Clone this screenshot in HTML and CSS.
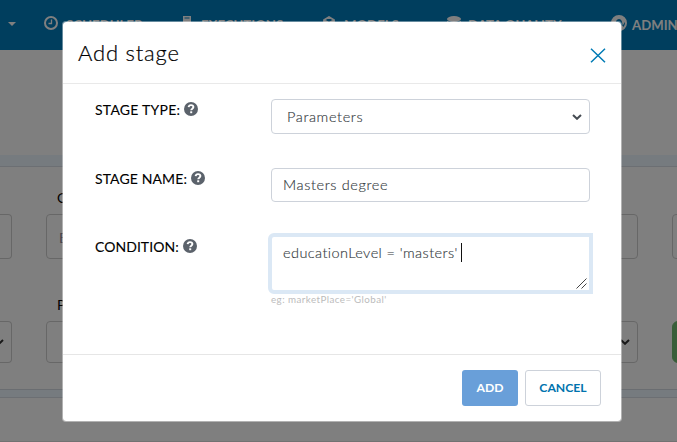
FILE: index.html
```
<!DOCTYPE html>
<html lang="en">
<head>
<meta charset="utf-8">
<title>Add stage</title>
<link rel="stylesheet" href="styles.css">
</head>
<body>
<svg width="0" height="0" class="defs">
  <symbol id="help" viewBox="0 0 14 14"><circle cx="7" cy="7" r="7" fill="#5b626b"/><path d="M4.600 5.200C4.800 3.700 5.800 3.100 7 3.100c1.400 0 2.400.8 2.400 2 0 1.600-2.200 1.600-2.200 3.200" fill="none" stroke="#fff" stroke-width="1.900"/><rect x="6.200" y="9.300" width="2" height="1.900" fill="#fff"/></symbol>
  <symbol id="chevron" viewBox="0 0 10 6"><path d="M1 1l4 3.800L9 1" fill="none" stroke="currentColor" stroke-width="2"/></symbol>
</svg>
<div class="page">
  <nav class="nav">
    <span class="caret"></span>
    <svg class="clock" viewBox="0 0 14 14"><circle cx="7" cy="7" r="6" fill="none" stroke="currentColor" stroke-width="2"/><path d="M7.500 3.500v4H4.500" fill="none" stroke="currentColor" stroke-width="1.300"/></svg>
    <span class="scheduler">SCHEDULER</span>
    <svg viewBox="0 0 8 14"><path d="M0 0h8v14H0zM1.500 1.500v1h5v-1z" fill="currentColor" fill-rule="evenodd"/></svg>
    <span class="executions">EXECUTIONS</span>
    <svg viewBox="0 0 12 14"><path d="M1 4l5-3 5 3v6l-5 3-5-3zM1 4l5 3 5-3M6 7v6" fill="none" stroke="currentColor" stroke-width="1.800"/></svg>
    <span class="models">MODELS</span>
    <svg viewBox="0 0 14 14"><ellipse cx="7" cy="3" rx="7" ry="3" fill="currentColor"/><path d="M0 5q7 4 14 0v6q-7 4-14 0z" fill="currentColor"/></svg>
    <span class="quality">DATA QUALITY</span>
    <svg class="user" viewBox="0 0 16 16"><circle cx="8" cy="8" r="7" fill="none" stroke="currentColor" stroke-width="2"/><path d="M1.500 6a7 7 0 0 1 13 0l-3 5Q11.500 4 8 4T4 11z" fill="currentColor"/><path d="M3 14q0-4 5-4t5 4q-5 3-10 0" fill="currentColor"/></svg>
    <span class="admin">ADMIN</span>
  </nav>
  <div class="toolbar"></div>
  <div class="band"></div>
  <div class="filters">
    <div class="field first"></div>
    <div class="field mid"><span class="caption">Category</span><div class="box">Enter</div></div>
    <div class="field last"><div class="box"></div></div>
  </div>
  <div class="filters second">
    <div class="field first"><div class="box"><svg class="chev"><use href="#chevron"/></svg></div></div>
    <div class="field mid"><span class="caption">Period</span><div class="box"><svg class="chev"><use href="#chevron"/></svg></div></div>
    <div class="field last"><div class="box go"></div></div>
  </div>
  <div class="band thin"></div>
  <div class="rest"></div>
</div>
<div class="backdrop"></div>
<div class="modal">
  <header><h1>Add stage</h1><svg class="close" viewBox="0 0 16 15"><path d="M1 .7l14 13.600M15 .7L1 14.300" fill="none" stroke="#007bb5" stroke-width="1.500"/></svg></header>
  <main>
    <div class="row type"><div class="label"><span>STAGE TYPE:</span><svg><use href="#help"/></svg></div>
      <div class="control select"><span class="t1">Parameters</span><svg class="chev"><use href="#chevron"/></svg></div></div>
    <div class="row name"><div class="label"><span>STAGE NAME:</span><svg><use href="#help"/></svg></div>
      <div class="control"><span class="t2">Masters degree</span></div></div>
    <div class="row cond"><div class="label"><span>CONDITION:</span><svg><use href="#help"/></svg></div>
      <div><div class="control area"><span class="t3">educationLevel = 'masters'</span><i class="cursor"></i><svg class="grip" viewBox="0 0 11 11"><path d="M.5 10.500l10-10M5.500 10.500l5-5" stroke="#444" fill="none"/></svg></div>
      <div class="hint">eg: marketPlace='Global'</div></div></div>
  </main>
  <footer><div class="btn add">ADD</div><div class="btn cancel">CANCEL</div></footer>
</div>
</body>
</html>
```

FILE: styles.css
```
* { box-sizing: border-box; }
body { margin: 0; width: 677px; height: 442px; overflow: hidden; background: #fff; font-family: Lato, "Liberation Sans", sans-serif; }
.defs { position: absolute; }
svg { display: block; }

.page { height: 442px; overflow: hidden; }
.nav { height: 50px; background: #007cbc; color: #fff; display: grid; align-items: center; padding: 0 0 4px 8px; white-space: nowrap; font-size: 13.200px; font-weight: 700;
  grid-template-columns: 36px 22px 117px 18px 122px 21px 103px 21px 143px 21px 45px; }
.nav svg { width: 14px; height: 14px; }
.nav svg:nth-of-type(2) { width: 8px; }
.nav svg:nth-of-type(3) { width: 12px; }
.nav svg.user { width: 16px; height: 16px; }
.nav span { padding-top: 3px; }
.nav .caret { width: 8px; padding: 0; margin-top: 2px; border: 4px solid transparent; border-top-color: #fff; border-bottom: 0; }
.toolbar { height: 105px; }
.band { height: 12px; background: #ecf6ff; border-bottom: 1px solid #d8dfe6; }
.filters { height: 107px; padding-top: 24px; display: grid; grid-template-columns: 46px 626px 60px; }
.field { display: flex; flex-direction: column; justify-content: flex-start; }
.caption { height: 23px; padding-left: 11px; font-size: 14px; color: #000; line-height: 14px; }
.box { width: 592px; height: 45px; border: 1px solid #cfcfcf; border-radius: 4px; padding: 14px 12px; font-size: 14px; line-height: 17px; color: #889; position: relative; }
.first .box, .filters:not(.second) .first { width: 12px; border-left: 0; border-radius: 0 4px 4px 0; }
.filters:not(.second) .first { height: 45px; margin-top: 23px; border: 1px solid #cfcfcf; border-left: 0; }
.last .box { margin-top: 23px; }
.second { height: 115px; }
.filters.second .box { height: 42px; }
.second .first .box { margin-top: 23px; padding: 0; }
.box .chev { position: absolute; right: 7px; top: 17px; width: 10px; height: 6px; color: #333; }
.filters.second .go { background: #73bd73; border-color: #73bd73; border-radius: 6px; }
.thin { height: 9px; border-top: 1px solid #d4dbe2; }
.rest { height: 44px; border-bottom: 1px solid #e5e5e5; }
.backdrop { position: absolute; inset: 0; background: rgba(0, 0, 0, .5); }

.modal { position: absolute; left: 62px; top: 21px; width: 560px; height: 401px; background: #fff; background-clip: padding-box; border: 1px solid rgba(255, 255, 255, .4); border-radius: 4px; display: flex; flex-direction: column; color: #000; }
header { height: 62px; border-bottom: 1px solid #e9e9e9; display: flex; justify-content: space-between; padding: 0 15px; }
h1 { margin: 17px 0 0; font-size: 22px; line-height: 28px; font-weight: 300; letter-spacing: .8px; color: #000; -webkit-text-stroke: .2px #000; }
.close { width: 16px; height: 15px; margin-top: 26px; }
main { height: 270px; padding: 15px 28px 0 32px; }
.row { display: grid; grid-template-columns: 176px 320px; height: 69px; }
.cond { height: 68px; }
.name { height: 68px; }
.label { display: flex; height: 22px; font-size: 14px; line-height: 22px; white-space: nowrap; gap: 4px; letter-spacing: .25px; -webkit-text-stroke: .1px #000; }
.name .label { letter-spacing: .12px; }
.cond .label { letter-spacing: .05px; }
.label svg { width: 14px; height: 14px; margin-top: 3px; }
.control { width: 319px; height: 34px; border: 1px solid #cdd2da; border-radius: 4px; padding: 0 12px 2px 11px; display: flex; align-items: center; font-size: 14.500px; font-weight: 300; color: #343a40; -webkit-text-stroke: .15px #343a40; white-space: nowrap; letter-spacing: .62px; }
.select { height: 35px; padding: 0 7px 0 15px; justify-content: space-between; }
.select .chev { width: 10px; height: 6px; color: #454b52; }
.area { position: relative; width: 325px; height: 61px; margin: -3px 0 0 -3px; border: 4px solid #dbe8f5; border-radius: 6px 0 0 6px; align-items: flex-start; padding: 6px 11px; line-height: 20px; letter-spacing: .42px; }
.cursor { width: 1px; height: 19px; background: #111; margin: 0 0 0 3px; }
.grip { position: absolute; right: 2px; bottom: 1px; width: 11px; height: 11px; }
.hint { font-size: 9.800px; line-height: 12px; margin-top: -1px; color: #bcbcbc; letter-spacing: .44px; white-space: nowrap; }
footer { flex: 1; border-top: 1px solid #e6e6e6; padding: 15px 20px 0 0; display: flex; justify-content: flex-end; gap: 7px; }
.btn { height: 36px; border-radius: 3px; font-size: 12.200px; font-weight: 700; display: flex; align-items: center; justify-content: center; padding-bottom: 1px; }
.add { width: 56px; background: #699fd9; color: #fff; }
.cancel { width: 76px; border: 1px solid #cdd2da; color: #0073ae; }
```
